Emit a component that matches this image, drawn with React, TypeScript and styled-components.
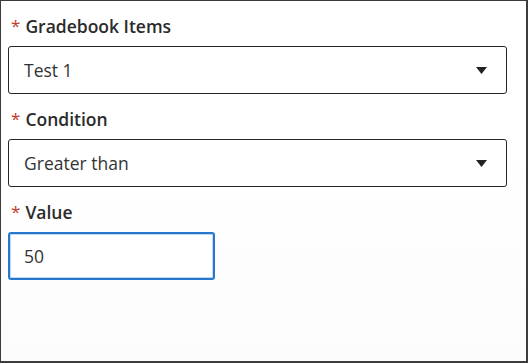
import React from 'react';
import styled, { createGlobalStyle } from 'styled-components';

const Global = createGlobalStyle`
  html, body { margin: 0; padding: 0; background: #ffffff; }
  * { box-sizing: border-box; }
`;

const Panel = styled('div')`
  width: 528px;
  height: 363px;
  border: 1px solid #3c3c3c;
  border-right-width: 2px;
  border-bottom-width: 2px;
  background: linear-gradient(#ffffff 40%, #fcfcfc);
  padding: 13px 19px 0 7px;
  font-family: 'Open Sans', 'Noto Sans', sans-serif;
  display: flex;
  flex-direction: column;
`;

const Field = styled('div')`
  display: flex;
  flex-direction: column;
  gap: 8px;
  margin-bottom: 13px;
`;

const Label = styled('label')`
  font-size: 17.5px;
  line-height: 24px;
  font-weight: 600;
  color: #2b2b2b;
  display: flex;
  align-items: center;
  gap: 5px;
  padding-left: 3px;
`;

const Star = styled('span')`
  color: #c0392b;
  font-weight: 400;
  font-size: 17px;
`;

const Select = styled('div')`
  height: 48px;
  border: 1px solid #262626;
  border-radius: 3px;
  background: #ffffff;
  display: flex;
  align-items: center;
  justify-content: space-between;
  padding: 0 19px 0 15px;
  font-size: 17.5px;
  color: #333333;
`;

const Arrow = styled('svg')`
  width: 11px;
  height: 7px;
`;

const Input = styled('input')<{ $width: number }>`
  width: ${(p) => p.$width}px;
  height: 48px;
  border: 2px solid #2a76cc;
  border-radius: 3px;
  box-shadow: inset 0 0 0 1px #bcd7f3;
  outline: none;
  padding: 0 14px;
  font-family: inherit;
  font-size: 17.5px;
  color: #333333;
  background: #ffffff;
`;

function Dropdown({ value }: { value: string }) {
  return (
    <Select>
      <span>{value}</span>
      <Arrow viewBox="0 0 11 7">
        <path d="M0 0 L11 0 L5.5 7 Z" fill="#222" />
      </Arrow>
    </Select>
  );
}

export default function App() {
  return (
    <>
      <Global />
      <Panel>
        <Field>
          <Label><Star>*</Star>Gradebook Items</Label>
          <Dropdown value="Test 1" />
        </Field>
        <Field>
          <Label><Star>*</Star>Condition</Label>
          <Dropdown value="Greater than" />
        </Field>
        <Field>
          <Label><Star>*</Star>Value</Label>
          <Input $width={207} defaultValue="50" />
        </Field>
      </Panel>
    </>
  );
}
